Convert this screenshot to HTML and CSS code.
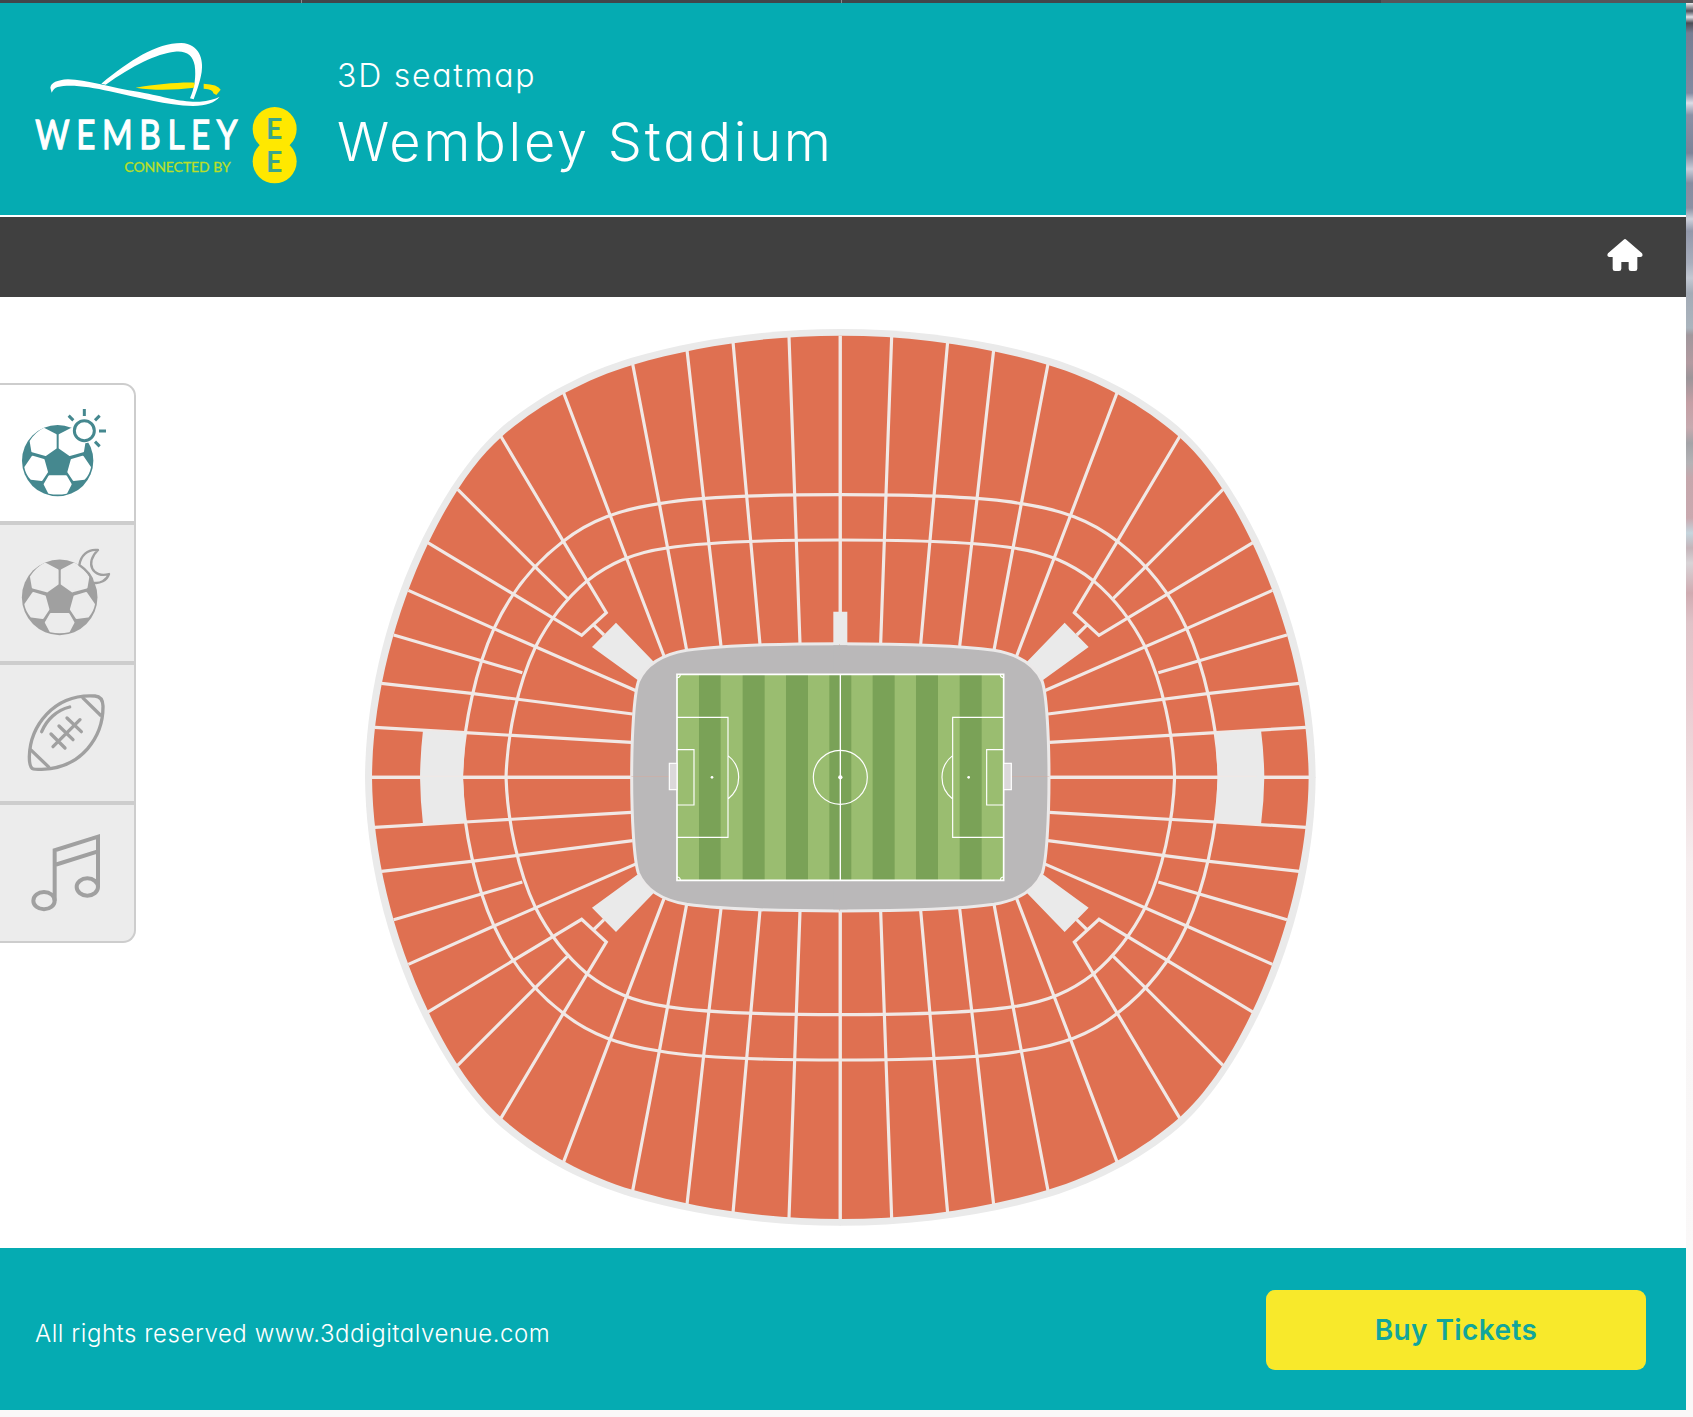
FILE: index.html
```html
<!DOCTYPE html>
<html lang="en">
<head>
<meta charset="utf-8">
<title>Wembley Stadium 3D seatmap</title>
<link rel="stylesheet" href="styles.css">
</head>
<body>
<div class="topbar"><span></span><span></span><span></span><span></span></div>
<div class="page">
  <div class="panel">
    <header class="header">
      <svg class="logo" viewBox="100 110 800 450">
        <path fill="#fff" d="M152,262 Q155,240 205,237 C260,238 330,262 420,275 C500,290 540,306 600,304 Q640,300 660,289 Q640,315 580,317 C500,316 420,292 330,273 C270,259 210,251 174,260 Q162,264 156,277 Z"/>
        <path fill="#fff" d="M305,250 C390,180 470,128 545,128 C600,130 612,180 606,215 C600,250 590,275 582,297 L571,294 C584,265 590,230 585,195 C580,165 560,150 525,154 C470,160 400,195 318,253Z"/>
        <path fill="#ffe800" d="M408,262 C470,252 540,245 585,247 L583,262 C530,268 470,272 408,262Z M612,250 Q655,252 663,268 L650,284 L641,279 Q642,267 612,265Z"/>
        <text class="logo-name" transform="translate(107 446) scale(.8 1)" textLength="758">WEMBLEY</text>
        <text class="logo-sub" x="374" y="516" textLength="319">CONNECTED BY</text>
        <circle cx="825" cy="386" r="66" fill="#ffe800"/>
        <circle cx="825" cy="483" r="66" fill="#ffe800"/>
        <text class="logo-ee" x="799" y="415">E</text>
        <text class="logo-ee" x="799" y="515">E</text>
      </svg>
      <div class="titles">
        <p class="subtitle">3D seatmap</p>
        <h1 class="title">Wembley Stadium</h1>
      </div>
    </header>
    <nav class="nav">
      <svg class="home" viewBox="51 117 106 96"><path fill="#fff" d="M100,119 Q104,115 108,119 L155,160 Q160,171 150,171 H141 V206 Q141,213 134,213 H122 Q115,213 115,206 V186 H93 V206 Q93,213 86,213 H74 Q67,213 67,206 V171 H56 Q48,169 53,160Z"/></svg>
    </nav>
    <main class="main">
      <div class="tabs">
        <div class="tab active">
          <svg viewBox="0 45 402 408">
            <defs>
              <g id="ball">
                <circle r="107" fill="currentColor"/>
                <g class="patch">
                  <path d="M-41,-95 L-6,-77 V-38 L-36,-17 L-76,-28 L-81,-58 Q-64,-84 -41,-95Z"/>
                  <path d="M41,-95 L6,-77 V-38 L36,-17 L76,-28 L81,-58 Q64,-84 41,-95Z"/>
                  <path d="M-75,-12 L-42,-2 L-32,34 L-48,58 L-80,54 Q-93,40 -97,20Z"/>
                  <path d="M75,-12 L42,-2 L32,34 L48,58 L80,54 Q93,40 97,20Z"/>
                  <path d="M-25,47 H25 L39,71 L26,96 Q0,101 -26,96 L-39,71Z"/>
                </g>
              </g>
            </defs>
            <use href="#ball" x="173" y="272"/>
            <circle class="patch" cx="253" cy="182" r="35"/>
            <g class="stroke" stroke-width="9">
              <circle cx="253" cy="182" r="30"/>
              <path d="M253,117V138 M206,137L220,151 M299,137L285,151 M297,183H318 M285,215L299,229"/>
            </g>
          </svg>
        </div>
        <div class="tab">
          <svg viewBox="0 465 402 408">
            <use href="#ball" transform="translate(179 682) scale(1.06)"/>
            <path class="moon" d="M238,585 C242,558 262,536 294,540 C252,580 280,626 327,612 C320,632 300,642 279,638 Q274,610 238,585Z"/>
          </svg>
        </div>
        <div class="tab">
          <svg viewBox="0 45 402 408">
            <g class="stroke" stroke-width="10">
              <path d="M100,357 Q88,354 88,320 C90,230 160,130 285,138 Q308,140 309,168 C310,260 245,355 125,358 Q108,359 100,357Z"/>
              <path d="M91,298L148,353 M247,142L304,198"/>
              <path stroke-linecap="round" d="M125,245 C140,210 170,180 209,171 M159,290L240,209 M153,252L195,294 M177,228L219,269 M201,204L244,245"/>
            </g>
          </svg>
        </div>
        <div class="tab">
          <svg viewBox="0 465 402 408">
            <g class="stroke" stroke-width="12">
              <path d="M164,752V601L294,560V711 M164,645L294,604"/>
              <ellipse cx="132" cy="752" rx="32" ry="26"/>
              <ellipse cx="262" cy="711" rx="32" ry="26"/>
            </g>
          </svg>
        </div>
      </div>
      <svg class="stadium" viewBox="0 0 2882 2744">
        <defs>
          <g id="stand">
            <path fill="#eaeaea" d="M15,1374 V1372 C17,1140 75,885 188,655 C250,530 325,415 410,335 C515,240 660,160 815,113 C1005,58 1220,27 1441,27 H1443 V1374Z"/>
            <path fill="#df7051" d="M36,1374 V1372 C38,1150 95,900 206,667 C270,533 345,420 425,350 C530,258 670,178 820,134 C1010,78 1220,47 1441,47 H1443 V1374Z"/>
            <g fill="none" stroke="#f1e8e5" stroke-width="9.500">
              <path d="M1443,524 H1441 C1220,524 1000,532 898,551 C780,569 690,600 610,664 C530,725 455,810 402,926 C350,1040 310,1210 304,1374"/>
              <path d="M1443,660 H1441 C1250,660 1050,664 921,684 C820,698 750,730 682,782 C625,830 570,895 526,982 C475,1090 442,1240 438,1374"/>
              <path d="M1441,47V972 M1287,50L1304,524L1320,970 M1119,65L1160,528L1200,973 M981,90L1031,537L1083,978 M818,132L898,551L980,991 M610,216L750,585L912,1008"/>
              <path d="M422,348L610,664L739,878L665,946L202,667 M700,914L732,945 M293,508L527,742L622,835 M145,811L402,926L830,1113 M101,945L487,1058 M64,1090L334,1120L818,1182 M44,1222L315,1238L814,1267 M34,1372H814"/>
            </g>
            <path fill="#eaeaea" d="M189,1231L316,1238L309,1374H180Q181,1300 189,1231Z M768,908L884,1028L838,1084L696,981Z"/>
            <path fill="#bab8b9" d="M1443,971 H1441 C1250,971 1080,977 980,991 C885,1007 850,1050 835,1085 C822,1125 815,1250 815,1374 H1443Z"/>
            <path fill="none" stroke="#ebe9e9" stroke-width="9" d="M1443,971 H1441 C1250,971 1080,977 980,991 C885,1007 850,1050 835,1085 C822,1125 815,1250 815,1374"/>
          </g>
          <g id="box" fill="none" stroke="#fff" stroke-width="3.5">
            <rect x="928" y="1330" width="23" height="79" fill="#dbd8da"/>
            <path d="M951,1192H1104V1552H951 M951,1289H1002V1455H951 M1104,1307A82,82 0 0 1 1104,1437 M951,1073A10,10 0 0 0 961,1063 M951,1671A10,10 0 0 1 961,1681"/>
            <circle cx="1056" cy="1372" r="4" fill="#fff" stroke="none"/>
          </g>
        </defs>
        <use href="#stand"/>
        <use href="#stand" transform="matrix(-1 0 0 1 2882 0)"/>
        <use href="#stand" transform="matrix(1 0 0 -1 0 2744)"/>
        <use href="#stand" transform="matrix(-1 0 0 -1 2882 2744)"/>
        <path fill="#eaeaea" d="M1420,875h42v97h-42z M2690,1230H2703Q2712,1300 2713,1372Q2712,1444 2703,1514H2690Z"/>
        <path fill="#bab8b9" d="M1420,976h42v792h-42z"/>
        <rect x="951" y="1063" width="980" height="618" fill="#9abd70"/>
        <path fill="#7aa257" d="M1017,1063h65v618h-65z M1148,1063h66v618h-66z M1278,1063h66v618h-66z M1408,1063h66v618h-66z M1538,1063h66v618h-66z M1668,1063h66v618h-66z M1799,1063h66v618h-66z"/>
        <path fill="none" stroke="#fff" stroke-width="5" d="M951,1063H1931V1681H951Z"/>
        <path fill="none" stroke="#fff" stroke-width="4" d="M1441,1063V1681"/>
        <circle cx="1441" cy="1372" r="81" fill="none" stroke="#fff" stroke-width="3.5"/>
        <circle cx="1441" cy="1372" r="6.500" fill="#fff"/>
        <use href="#box"/>
        <use href="#box" transform="matrix(-1 0 0 1 2882 0)"/>
      </svg>
    </main>
    <footer class="footer">
      <p class="rights">All rights reserved www.3ddigitalvenue.com</p>
      <div class="buy">Buy Tickets</div>
    </footer>
  </div>
  <div class="backdrop"></div>
</div>
</body>
</html>
```
FILE: styles.css
```css
* { box-sizing: border-box; }
body { margin: 0; background: #faf8f8; font-family: Inter, "Open Sans", sans-serif; font-feature-settings: "cv11"; }
p, h1 { margin: 0; }
.topbar { display: flex; height: 3px; background: #41464a; }
.topbar span:nth-child(1) { width: 302px; border-right: 1px solid #8a8d90; }
.topbar span:nth-child(2) { width: 540px; border-right: 1px solid #8a8d90; }
.topbar span:nth-child(3) { width: 539px; }
.topbar span:nth-child(4) { flex: 1; background: #55565a; }
.page { display: flex; height: 1414px; }
.panel { width: 1686px; height: 1407px; background: #fff; }
.backdrop {
  flex: 1;
  background: linear-gradient(180deg, #eee 0, #50525c 8px, #dfe0e6 14px, #4c4d55 20px, #777d92 30px, #8289a0 90px, #dcdde6 100px, #8a90a5 112px, #7c8398 150px, #c9ccd8 166px, #868ca0 180px, #8b90a3 205px, #ced1db 216px, #9298aa 228px, #a8aebc 260px, #c3c8d2 275px, #a3abb6 290px, #aab4bd 325px, #a0979c 332px, #b29aa0 360px, #9b9599 375px, #c49fa5 400px, #c6aaaf 425px, #a3a3a7 440px, #b3b2b5 460px, #c5a7ac 475px, #c9a9af 515px, #c5d5dd 530px, #c4b4b9 545px, #d8d3d6 560px, #cfabb1 590px, #dfc3c8 620px, #e9c8ce 680px, #eed9dc 760px, #f6eeef 860px, #f8f6f6 1000px, #faf8f8 1250px);
}
.header { display: flex; height: 212px; background: #05abb2; }
.logo { width: 266.67px; height: 150px; margin: 33.67px 0 0 33.33px; }
.logo-name { font: 400 124px Lato, sans-serif; fill: #fff; stroke: #fff; stroke-width: 4px; }
.logo-sub { font: 400 42px Lato, sans-serif; fill: #b9df28; stroke: #b9df28; stroke-width: 1px; }
.logo-ee { font: 700 85px Lato, sans-serif; fill: #3aa68c; }
.titles { display: flex; flex-direction: column; padding: 49px 0 0 37px; color: #fff; font-weight: 300; }
.subtitle { font-size: 32px; line-height: 48px; letter-spacing: 1.750px; }
.title { font-size: 54px; line-height: 84px; font-weight: 300; letter-spacing: 2.800px; white-space: nowrap; }
.nav { display: flex; justify-content: flex-end; height: 82px; padding: 22px 43px 0 0; background: #404040; border-top: 2px solid #fff; }
.home { width: 36px; height: 32px; }
.main { display: flex; align-items: flex-start; gap: 224px; height: 951px; }
.tabs { width: 136px; margin-top: 86px; }
.tab { --tab-bg: #ececec; height: 140px; border: 2px solid #cdcdcd; border-left: 0; background: var(--tab-bg); color: #a0a0a0; }
.tab:first-child { border-top-right-radius: 13px; }
.tab:last-child { border-bottom-right-radius: 13px; }
.tab.active { --tab-bg: #fff; color: #45888f; }
.tab svg { display: block; width: 134px; height: 136px; }
.patch { fill: var(--tab-bg); stroke: var(--tab-bg); stroke-width: 6px; stroke-linejoin: round; }
.stroke { fill: none; stroke: currentColor; }
.moon { fill: var(--tab-bg); stroke: currentColor; stroke-width: 7px; stroke-linejoin: round; }
.stadium { width: 960.67px; height: 914.67px; margin-top: 23px; }
.footer { display: flex; justify-content: space-between; height: 162px; padding: 42px 40px 0 35px; background: #05abb2; }
.rights { color: #fff; font-size: 24px; line-height: 88px; font-weight: 300; letter-spacing: .550px; }
.buy { width: 380px; height: 80px; border-radius: 9px; background: #f8e92b; color: #12a59b; font-size: 28px; font-weight: 600; line-height: 81px; text-align: center; letter-spacing: .4px; }
```
